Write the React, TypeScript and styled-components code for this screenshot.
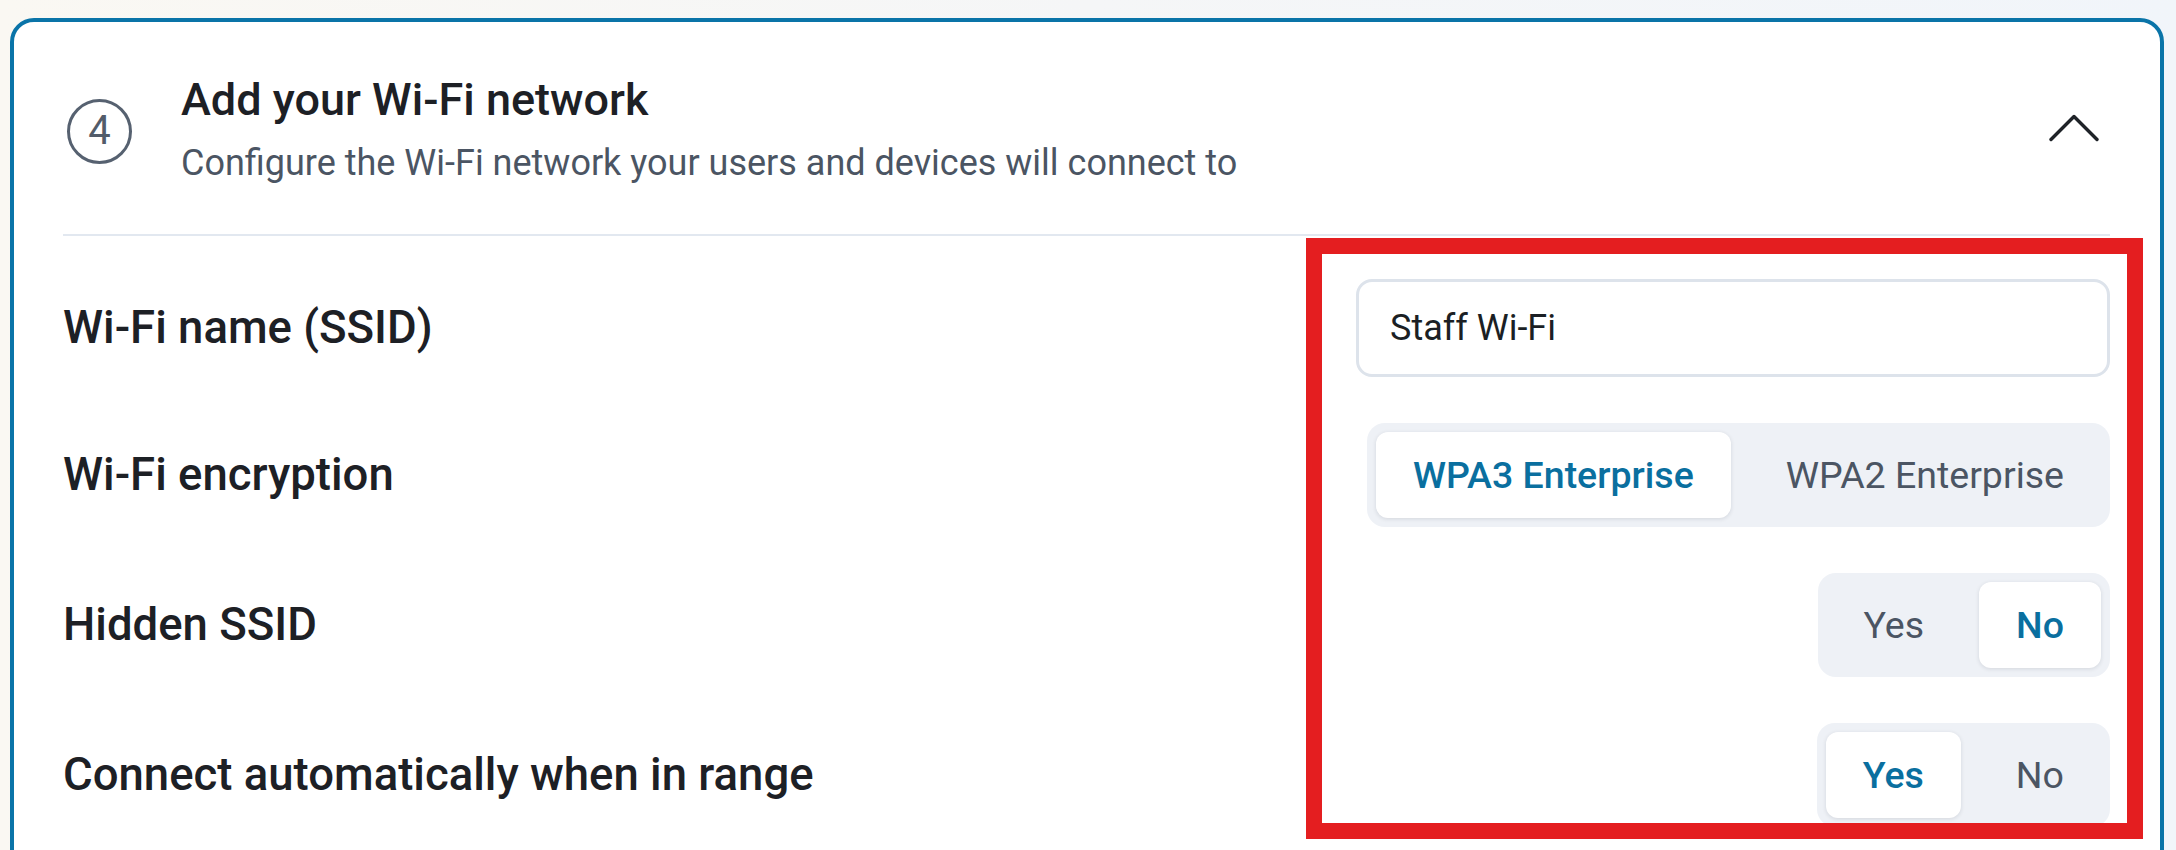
import styled, { createGlobalStyle } from "styled-components";
import { useState } from "react";

type Option = {
  value: string;
  label: string;
};

const encryptionOptions: Option[] = [
  { value: "wpa3", label: "WPA3 Enterprise" },
  { value: "wpa2", label: "WPA2 Enterprise" },
];

const yesNo: Option[] = [
  { value: "yes", label: "Yes" },
  { value: "no", label: "No" },
];

function Segmented({
  options,
  value,
  onChange,
}: {
  options: Option[];
  value: string;
  onChange: (v: string) => void;
}) {
  return (
    <SegmentGroup>
      {options.map((o) => (
        <Segment
          key={o.value}
          $active={o.value === value}
          onClick={() => onChange(o.value)}
        >
          {o.label}
        </Segment>
      ))}
    </SegmentGroup>
  );
}

export default function App() {
  const [ssid, setSsid] = useState("Staff Wi-Fi");
  const [encryption, setEncryption] = useState("wpa3");
  const [hidden, setHidden] = useState("no");
  const [autoConnect, setAutoConnect] = useState("yes");

  return (
    <>
      <GlobalStyle />
      <Page>
        <Card>
          <Header>
            <StepBadge>4</StepBadge>
            <HeaderText>
              <Title>Add your Wi-Fi network</Title>
              <Subtitle>
                Configure the Wi-Fi network your users and devices will connect
                to
              </Subtitle>
            </HeaderText>
            <Toggle aria-label="Collapse">
              <svg width="50" height="28" viewBox="0 0 50 28" fill="none">
                <polyline
                  points="2,25.5 25,2.5 48,25.5"
                  stroke="#1f2328"
                  strokeWidth="3.4"
                  strokeLinecap="round"
                  strokeLinejoin="round"
                />
              </svg>
            </Toggle>
          </Header>

          <Fields>
            <Row>
              <Label>Wi-Fi name (SSID)</Label>
              <Input value={ssid} onChange={(e) => setSsid(e.target.value)} />
            </Row>
            <Row>
              <Label>Wi-Fi encryption</Label>
              <Segmented
                options={encryptionOptions}
                value={encryption}
                onChange={setEncryption}
              />
            </Row>
            <Row>
              <Label>Hidden SSID</Label>
              <Segmented options={yesNo} value={hidden} onChange={setHidden} />
            </Row>
            <Row>
              <Label>Connect automatically when in range</Label>
              <Segmented
                options={yesNo}
                value={autoConnect}
                onChange={setAutoConnect}
              />
            </Row>
          </Fields>

          <Highlight />
        </Card>
      </Page>
    </>
  );
}

const GlobalStyle = createGlobalStyle`
  html, body {
    margin: 0;
    padding: 0;
    overflow: hidden;
  }
  body {
    font-family: Roboto, "Liberation Sans", Arial, sans-serif;
    background: linear-gradient(90deg, #faf8f3 0%, #f5f6f7 50%, #f1f5fa 100%);
  }
  * {
    box-sizing: border-box;
  }
`;

const Page = styled.div`
  padding: 18px 12px 0 10px;
  height: 850px;
`;

const Card = styled.div`
  position: relative;
  background: #ffffff;
  border: 4px solid #0a74a8;
  border-radius: 24px;
  padding: 0 50px 80px 49px;
`;

const Header = styled.div`
  display: flex;
  align-items: center;
  padding: 52px 0 46px;
  border-bottom: 2px solid #e2e8f0;
`;

const StepBadge = styled.div`
  flex: none;
  width: 65px;
  height: 65px;
  margin-left: 4px;
  margin-right: 49px;
  border: 3.5px solid #566170;
  border-radius: 50%;
  display: flex;
  align-items: center;
  justify-content: center;
  font-size: 40px;
  line-height: 1;
  color: #525c6a;
`;

const HeaderText = styled.div`
  flex: 1;
  display: flex;
  flex-direction: column;
  gap: 12px;
`;

const Title = styled.h2`
  margin: 0;
  font-size: 45px;
  line-height: 52px;
  font-weight: 500;
  color: #1d2025;
`;

const Subtitle = styled.p`
  margin: 0;
  font-size: 36px;
  line-height: 50px;
  color: #4b5563;
`;

const Toggle = styled.button`
  flex: none;
  border: none;
  background: none;
  padding: 0;
  margin: 0 11px 6px 0;
  display: flex;
  cursor: pointer;
`;

const Fields = styled.div`
  display: flex;
  flex-direction: column;
  gap: 46px;
  padding-top: 43px;
`;

const Row = styled.div`
  display: flex;
  align-items: center;
  justify-content: space-between;
`;

const Label = styled.span`
  font-size: 45.5px;
  line-height: 52px;
  font-weight: 500;
  color: #1d2025;
`;

const Input = styled.input`
  width: 754px;
  height: 98px;
  border: 3px solid #dde3eb;
  border-radius: 16px;
  padding: 0 31px;
  font-family: inherit;
  font-size: 36px;
  color: #1b1f24;
  background: #ffffff;
  outline: none;
`;

const SegmentGroup = styled.div`
  display: inline-flex;
  gap: 18px;
  padding: 9px;
  background: #eef1f6;
  border-radius: 18px;
`;

const Segment = styled.button<{ $active: boolean }>`
  height: 86px;
  padding: 0 37px;
  border: none;
  border-radius: 12px;
  font-family: inherit;
  font-size: 37.5px;
  cursor: pointer;
  background: ${(p) => (p.$active ? "#ffffff" : "transparent")};
  color: ${(p) => (p.$active ? "#0a6f9f" : "#4b5563")};
  font-weight: ${(p) => (p.$active ? 500 : 400)};
  box-shadow: ${(p) =>
    p.$active ? "0 1px 4px rgba(15, 23, 42, 0.12)" : "none"};
`;

const Highlight = styled.div`
  position: absolute;
  left: 1292px;
  top: 216px;
  width: 837px;
  height: 601px;
  border: 16px solid #e41e20;
  pointer-events: none;
`;
